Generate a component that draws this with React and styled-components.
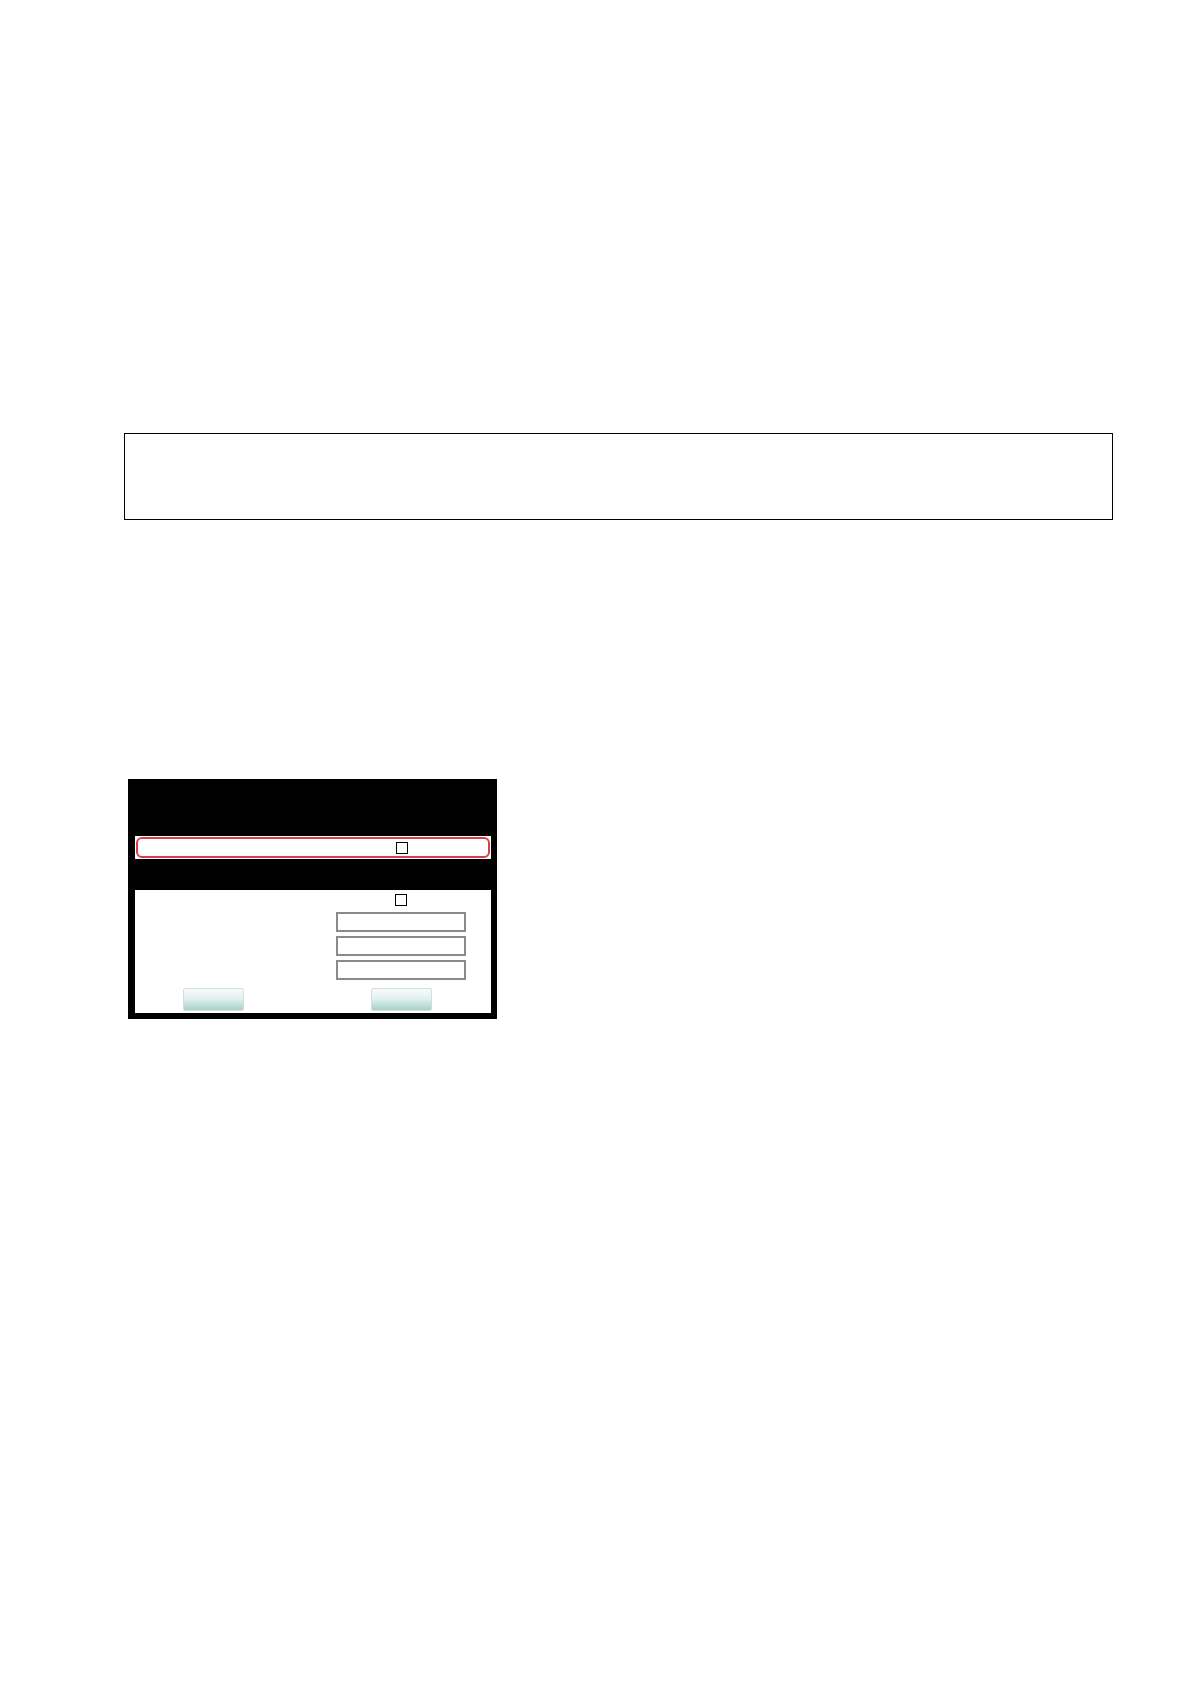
import React from 'react';
import styled, { createGlobalStyle } from 'styled-components';

const GlobalStyle = createGlobalStyle`
  html, body {
    margin: 0;
    padding: 0;
    background: #ffffff;
    font-family: "Liberation Sans", Arial, sans-serif;
  }
`

const Page = styled.div`
  width: 1190px;
  min-height: 1684px;
  padding-top: 433px;
  box-sizing: border-box;
`
const NoteBox = styled.div`
  margin-left: 124px;
  width: 989px;
  height: 87px;
  border: 1px solid #000;
  box-sizing: border-box;
`
const Dialog = styled.div`
  margin: 259px 0 0 128px;
  width: 369px;
  height: 240px;
  background: #000;
  padding: 57px 6px 6px 7px;
  box-sizing: border-box;
  display: flex;
  flex-direction: column;
`
const SelectedRow = styled.div`
  height: 23px;
  background: #fff;
  padding: 1px;
  box-sizing: border-box;
`
const RowFrame = styled.div`
  height: 100%;
  border: 2px solid #d83e4a;
  border-radius: 6px;
  box-sizing: border-box;
  display: grid;
  grid-template-columns: 199px 130px;
  align-items: center;
`
const Band = styled.div`
  height: 31px;
  flex: none;
`
const Panel = styled.div`
  flex: 1;
  background: #fff;
  padding-top: 4px;
  display: grid;
  grid-template-columns: 201px 130px;
  grid-auto-rows: min-content;
  row-gap: 4px;
`
const Check = styled.span`
  grid-column: 2;
  justify-self: center;
  width: 12px;
  height: 12px;
  border: 1.5px solid #000;
  box-sizing: border-box;
  background: #fff;
  margin-bottom: ${p => p.$gap || 0}px;
`
const Field = styled.input`
  grid-column: 2;
  width: 130px;
  height: 20px;
  border: 2px solid #8a8a8a;
  box-sizing: border-box;
  background: #fff;
  outline: none;
  padding: 0;
`
const Button = styled.button`
  width: 61px;
  height: 23px;
  margin-top: 4px;
  border: 1px solid #d5dede;
  border-radius: 2px;
  background: linear-gradient(to bottom, #f7fbfb 0%, #e4f1ef 45%, #a6d1ca 100%);
  padding: 0;
  justify-self: ${p => (p.$right ? 'center' : 'start')};
  margin-left: ${p => (p.$right ? 0 : 48)}px;
`

export default function App() {
  return (
    <>
      <GlobalStyle />
      <Page>
        <NoteBox />
        <Dialog>
          <SelectedRow>
            <RowFrame>
              <Check />
            </RowFrame>
          </SelectedRow>
          <Band />
          <Panel>
            <Check $gap={2} />
            <Field />
            <Field />
            <Field />
            <Button />
            <Button $right />
          </Panel>
        </Dialog>
      </Page>
    </>
  );
}
